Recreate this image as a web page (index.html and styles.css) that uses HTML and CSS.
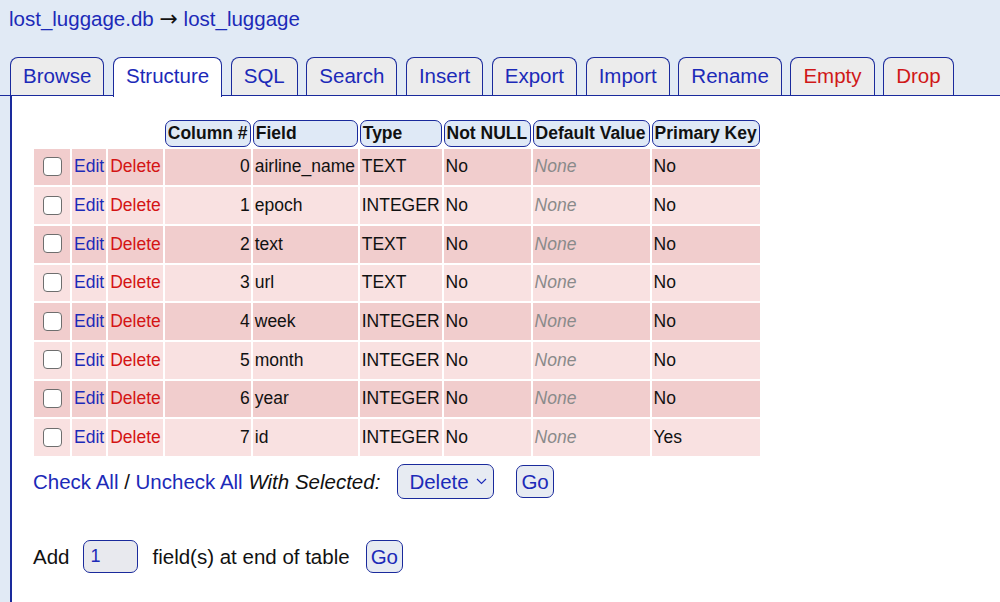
FILE: index.html
```html
<!DOCTYPE html>
<html lang="en">
<head>
  <meta charset="UTF-8" />
  <title>lost_luggage - Structure</title>
  <link rel="stylesheet" href="styles.css">
</head>
<body>
  <div class="crumbs">
    <a href="#">lost_luggage.db</a> <span class="arrow">&rarr;</span> <a href="#">lost_luggage</a>
  </div>

  <nav class="tabs">
    <a class="tab" href="#">Browse</a>
    <a class="tab active" href="#">Structure</a>
    <a class="tab" href="#">SQL</a>
    <a class="tab" href="#">Search</a>
    <a class="tab" href="#">Insert</a>
    <a class="tab" href="#">Export</a>
    <a class="tab" href="#">Import</a>
    <a class="tab" href="#">Rename</a>
    <a class="tab danger" href="#">Empty</a>
    <a class="tab danger" href="#">Drop</a>
  </nav>

  <div class="panel">
    <table class="fields">
      <thead>
        <tr>
          <td class="c-chk"></td>
          <td class="c-edit"></td>
          <td class="c-del"></td>
          <th class="c-num">Column #</th>
          <th class="c-field">Field</th>
          <th class="c-type">Type</th>
          <th class="c-nn">Not NULL</th>
          <th class="c-def">Default Value</th>
          <th class="c-pk">Primary Key</th>
        </tr>
      </thead>
      <tbody>
        <tr>
          <td class="chk"><input type="checkbox"></td>
          <td><a href="#">Edit</a></td>
          <td><a class="del" href="#">Delete</a></td>
          <td class="num">0</td><td>airline_name</td><td>TEXT</td><td>No</td><td class="none">None</td><td>No</td>
        </tr>
        <tr>
          <td class="chk"><input type="checkbox"></td>
          <td><a href="#">Edit</a></td>
          <td><a class="del" href="#">Delete</a></td>
          <td class="num">1</td><td>epoch</td><td>INTEGER</td><td>No</td><td class="none">None</td><td>No</td>
        </tr>
        <tr>
          <td class="chk"><input type="checkbox"></td>
          <td><a href="#">Edit</a></td>
          <td><a class="del" href="#">Delete</a></td>
          <td class="num">2</td><td>text</td><td>TEXT</td><td>No</td><td class="none">None</td><td>No</td>
        </tr>
        <tr>
          <td class="chk"><input type="checkbox"></td>
          <td><a href="#">Edit</a></td>
          <td><a class="del" href="#">Delete</a></td>
          <td class="num">3</td><td>url</td><td>TEXT</td><td>No</td><td class="none">None</td><td>No</td>
        </tr>
        <tr>
          <td class="chk"><input type="checkbox"></td>
          <td><a href="#">Edit</a></td>
          <td><a class="del" href="#">Delete</a></td>
          <td class="num">4</td><td>week</td><td>INTEGER</td><td>No</td><td class="none">None</td><td>No</td>
        </tr>
        <tr>
          <td class="chk"><input type="checkbox"></td>
          <td><a href="#">Edit</a></td>
          <td><a class="del" href="#">Delete</a></td>
          <td class="num">5</td><td>month</td><td>INTEGER</td><td>No</td><td class="none">None</td><td>No</td>
        </tr>
        <tr>
          <td class="chk"><input type="checkbox"></td>
          <td><a href="#">Edit</a></td>
          <td><a class="del" href="#">Delete</a></td>
          <td class="num">6</td><td>year</td><td>INTEGER</td><td>No</td><td class="none">None</td><td>No</td>
        </tr>
        <tr>
          <td class="chk"><input type="checkbox"></td>
          <td><a href="#">Edit</a></td>
          <td><a class="del" href="#">Delete</a></td>
          <td class="num">7</td><td>id</td><td>INTEGER</td><td>No</td><td class="none">None</td><td>Yes</td>
        </tr>
      </tbody>
    </table>

    <div class="bulk">
      <span><a href="#">Check All</a> / <a href="#">Uncheck All</a> <i>With Selected:</i></span>
      <span class="select-wrap">
        <select class="select">
          <option>Delete</option>
        </select>
        <svg class="chevron" width="11" height="7" viewBox="0 0 11 7"><path d="M1 1 L5.5 5.5 L10 1" fill="none" stroke="#1c2ab8" stroke-width="1.1"/></svg>
      </span>
      <button class="btn go-bulk">Go</button>
    </div>

    <div class="add">
      <span>Add</span>
      <input class="count" type="text" value="1">
      <span>field(s) at end of table</span>
      <button class="btn">Go</button>
    </div>
  </div>
</body>
</html>
```

FILE: styles.css
```css
/* Layout halaman struktur tabel */
body {
  margin: 0;
  background: #e1eaf5;
  font-family: "Liberation Sans", Arial, Helvetica, sans-serif;
  font-size: 20.5px;
  color: #111;
}

a {
  color: #1c2ab8;
  text-decoration: none;
}

.crumbs {
  padding: 6px 10px 0 9px;
  line-height: 26px;
}

.arrow {
  font-family: "DejaVu Sans", sans-serif;
  font-size: 22px;
  color: #111;
}

/* Tabs */
.tabs {
  display: flex;
  align-items: flex-end;
  gap: 8.6px;
  padding-left: 10px;
  margin-top: 25px;
  border-bottom: 1.5px solid #1a2a9c;
}

.tab {
  box-sizing: border-box;
  height: 38px;
  line-height: 36px;
  padding: 0 12px;
  background: #ececec;
  border: 1.5px solid #1a2a9c;
  border-bottom: none;
  border-radius: 8px 8px 0 0;
}

.tab.active {
  background: #fff;
  height: 39.5px;
  margin-bottom: -1.5px;
}

.tab.danger {
  color: #d01818;
}

/* Panel konten */
.panel {
  background: #fff;
  margin-left: 10px;
  border-left: 2px solid #1a2a9c;
  padding: 22px 0 0 20px;
  min-height: 484px;
}

.fields {
  border-collapse: separate;
  border-spacing: 2px;
  table-layout: fixed;
  font-size: 17.5px;
}

.fields th {
  box-sizing: border-box;
  height: 26.5px;
  padding: 0 2px;
  text-align: left;
  font-weight: 700;
  background: #dfe9f6;
  border: 1.5px solid #1a2a9c;
  border-radius: 7px;
  white-space: nowrap;
}

.fields thead td {
  height: 26.5px;
  padding: 0;
}

.c-chk { width: 36px; }
.c-edit { width: 34px; }
.c-del { width: 54px; }
.fields th.c-num { width: 86px; }
.fields th.c-field { width: 105px; }
.fields th.c-type { width: 80px; }
.fields th.c-nn { width: 87px; }
.fields th.c-def { width: 117px; }
.fields th.c-pk { width: 108px; }

.fields tbody td {
  box-sizing: border-box;
  height: 36.7px;
  padding: 0 2px;
  white-space: nowrap;
  vertical-align: middle;
}

.fields tbody tr:nth-child(odd) td { background: #f1cdcd; }
.fields tbody tr:nth-child(even) td { background: #f9e1e1; }

.fields td.num {
  text-align: right;
  padding-right: 1px;
}

.fields td.none {
  color: #8a8a8a;
  font-style: italic;
}

.fields td.chk {
  text-align: center;
  padding: 0;
}

.del { color: #d41414; }

input[type="checkbox"] {
  appearance: none;
  -webkit-appearance: none;
  box-sizing: border-box;
  width: 19px;
  height: 19px;
  margin: 4px 0 0 0;
  background: #fff;
  border: 1.5px solid #6e6e6e;
  border-radius: 4px;
}

/* Bawah tabel */
.bulk {
  display: flex;
  align-items: center;
  margin: 6px 0 0 1px;
}

.select-wrap {
  position: relative;
  margin-left: 17px;
  display: inline-flex;
}

.select {
  appearance: none;
  -webkit-appearance: none;
  box-sizing: border-box;
  width: 97px;
  height: 35px;
  padding: 0 0 0 11px;
  font-family: inherit;
  font-size: 20.5px;
  color: #1c2ab8;
  background: #e7ebf2;
  border: 1.5px solid #1a2a9c;
  border-radius: 7px;
}

.chevron {
  position: absolute;
  right: 7px;
  top: 14px;
}

.btn {
  box-sizing: border-box;
  height: 33px;
  padding: 0 4px;
  font-family: inherit;
  font-size: 20.5px;
  color: #1c2ab8;
  background: #e7ebf2;
  border: 1.5px solid #1a2a9c;
  border-radius: 7px;
}

.go-bulk {
  margin-left: 22px;
}

.add {
  display: flex;
  align-items: center;
  gap: 14px;
  margin: 41px 0 0 1px;
}

.count {
  box-sizing: border-box;
  width: 55px;
  height: 33px;
  padding: 0 6px;
  font-family: inherit;
  font-size: 18px;
  color: #1c2ab8;
  background: #e8e9ee;
  border: 1.5px solid #1a2a9c;
  border-radius: 7px;
}

.add .btn {
  margin-left: 2px;
}
```
